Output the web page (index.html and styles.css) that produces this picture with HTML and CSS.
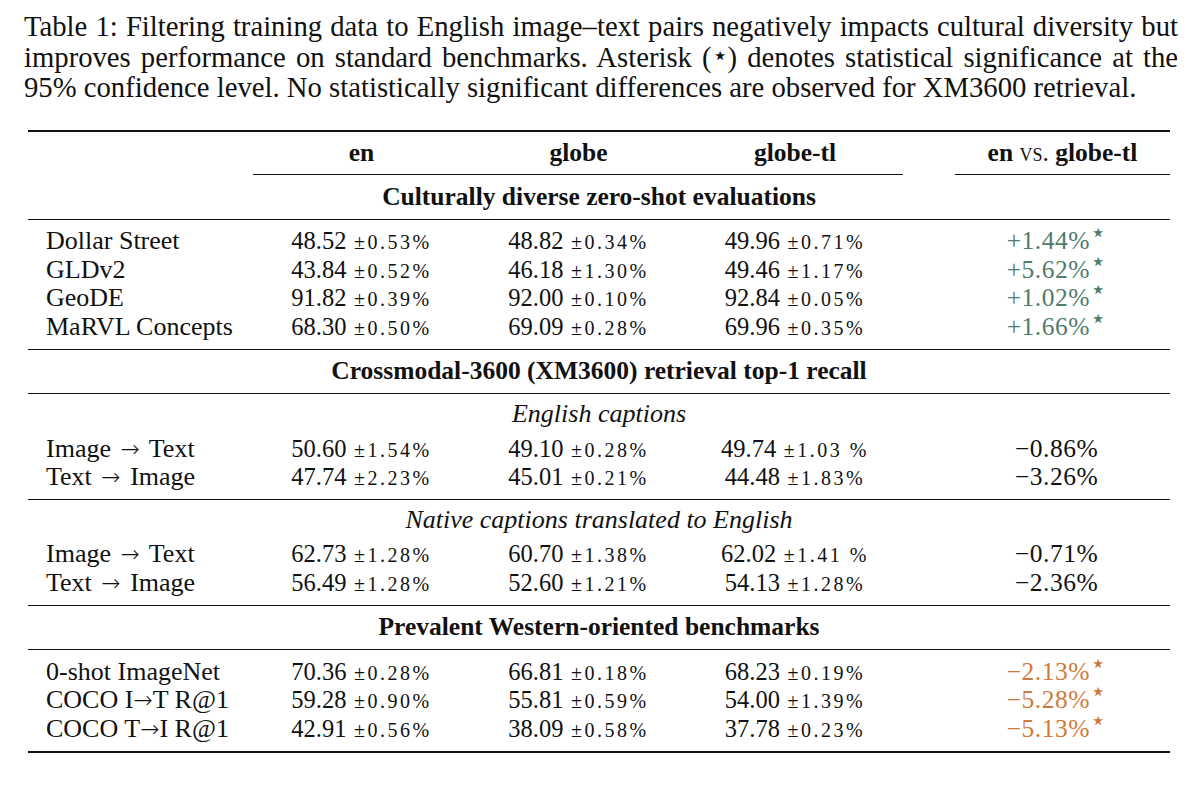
FILE: index.html
```html
<!DOCTYPE html>
<html lang="en">
<head>
<meta charset="utf-8">
<title>Table 1</title>
<link rel="stylesheet" href="styles.css">
</head>
<body>
<div class="page">
  <p class="caption">
    <span class="cl">Table 1: Filtering training data to English image–text pairs negatively impacts cultural diversity but</span>
    <span class="cl">improves performance on standard benchmarks. Asterisk (<span class="star-inline">⋆</span>) denotes statistical significance at the</span>
    <span class="cl last">95% confidence level. No statistically significant differences are observed for XM3600 retrieval.</span>
  </p>

  <div class="tbl">
    <div class="block head">
      <div class="row hrow">
        <div class="cell"></div>
        <div class="cell c b u">en</div>
        <div class="cell c b u">globe</div>
        <div class="cell c b u">globe-tl</div>
        <div class="cell"></div>
        <div class="cell c b u">en <span class="sc">vs.</span> globe-tl</div>
      </div>
      <div class="row sec-row">
        <div class="cell c b full">Culturally diverse zero-shot evaluations</div>
      </div>
    </div>

    <div class="block">
      <div class="row"><div class="cell lbl">Dollar Street</div><div class="cell c num">48.52<span class="pm"> ±0.53%</span></div><div class="cell c num">48.82<span class="pm"> ±0.34%</span></div><div class="cell c num">49.96<span class="pm"> ±0.71%</span></div><div class="cell"></div><div class="cell c diff pos">+1.44%<sup class="star">⋆</sup></div></div>
      <div class="row"><div class="cell lbl">GLDv2</div><div class="cell c num">43.84<span class="pm"> ±0.52%</span></div><div class="cell c num">46.18<span class="pm"> ±1.30%</span></div><div class="cell c num">49.46<span class="pm"> ±1.17%</span></div><div class="cell"></div><div class="cell c diff pos">+5.62%<sup class="star">⋆</sup></div></div>
      <div class="row"><div class="cell lbl">GeoDE</div><div class="cell c num">91.82<span class="pm"> ±0.39%</span></div><div class="cell c num">92.00<span class="pm"> ±0.10%</span></div><div class="cell c num">92.84<span class="pm"> ±0.05%</span></div><div class="cell"></div><div class="cell c diff pos">+1.02%<sup class="star">⋆</sup></div></div>
      <div class="row"><div class="cell lbl">MaRVL Concepts</div><div class="cell c num">68.30<span class="pm"> ±0.50%</span></div><div class="cell c num">69.09<span class="pm"> ±0.28%</span></div><div class="cell c num">69.96<span class="pm"> ±0.35%</span></div><div class="cell"></div><div class="cell c diff pos">+1.66%<sup class="star">⋆</sup></div></div>
    </div>

    <div class="block">
      <div class="row"><div class="cell c b full">Crossmodal-3600 (XM3600) retrieval top-1 recall</div></div>
    </div>

    <div class="block">
      <div class="row sub-row sub-en"><div class="cell c i full">English captions</div></div>
      <div class="row"><div class="cell lbl">Image <span class="arr sp">→</span> Text</div><div class="cell c num">50.60<span class="pm"> ±1.54%</span></div><div class="cell c num">49.10<span class="pm"> ±0.28%</span></div><div class="cell c num">49.74<span class="pm"> ±1.03 %</span></div><div class="cell"></div><div class="cell c diff">−0.86%</div></div>
      <div class="row"><div class="cell lbl">Text <span class="arr sp">→</span> Image</div><div class="cell c num">47.74<span class="pm"> ±2.23%</span></div><div class="cell c num">45.01<span class="pm"> ±0.21%</span></div><div class="cell c num">44.48<span class="pm"> ±1.83%</span></div><div class="cell"></div><div class="cell c diff">−3.26%</div></div>
    </div>

    <div class="block">
      <div class="row sub-row sub-nat"><div class="cell c i full">Native captions translated to English</div></div>
      <div class="row"><div class="cell lbl">Image <span class="arr sp">→</span> Text</div><div class="cell c num">62.73<span class="pm"> ±1.28%</span></div><div class="cell c num">60.70<span class="pm"> ±1.38%</span></div><div class="cell c num">62.02<span class="pm"> ±1.41 %</span></div><div class="cell"></div><div class="cell c diff">−0.71%</div></div>
      <div class="row"><div class="cell lbl">Text <span class="arr sp">→</span> Image</div><div class="cell c num">56.49<span class="pm"> ±1.28%</span></div><div class="cell c num">52.60<span class="pm"> ±1.21%</span></div><div class="cell c num">54.13<span class="pm"> ±1.28%</span></div><div class="cell"></div><div class="cell c diff">−2.36%</div></div>
    </div>

    <div class="block">
      <div class="row"><div class="cell c b full">Prevalent Western-oriented benchmarks</div></div>
    </div>

    <div class="block">
      <div class="row"><div class="cell lbl">0-shot ImageNet</div><div class="cell c num">70.36<span class="pm"> ±0.28%</span></div><div class="cell c num">66.81<span class="pm"> ±0.18%</span></div><div class="cell c num">68.23<span class="pm"> ±0.19%</span></div><div class="cell"></div><div class="cell c diff neg">−2.13%<sup class="star">⋆</sup></div></div>
      <div class="row"><div class="cell lbl">COCO I<span class="arr">→</span>T R@1</div><div class="cell c num">59.28<span class="pm"> ±0.90%</span></div><div class="cell c num">55.81<span class="pm"> ±0.59%</span></div><div class="cell c num">54.00<span class="pm"> ±1.39%</span></div><div class="cell"></div><div class="cell c diff neg">−5.28%<sup class="star">⋆</sup></div></div>
      <div class="row"><div class="cell lbl">COCO T<span class="arr">→</span>I R@1</div><div class="cell c num">42.91<span class="pm"> ±0.56%</span></div><div class="cell c num">38.09<span class="pm"> ±0.58%</span></div><div class="cell c num">37.78<span class="pm"> ±0.23%</span></div><div class="cell"></div><div class="cell c diff neg">−5.13%<sup class="star">⋆</sup></div></div>
    </div>
  </div>
</div>
</body>
</html>
```

FILE: styles.css
```css
html, body {
  margin: 0;
  padding: 0;
  background: #ffffff;
}

body {
  font-family: "Liberation Serif", "Times New Roman", serif;
  color: #111111;
  width: 1200px;
  height: 789px;
  overflow: hidden;
}

.page {
  padding: 11px 0 0 24px;
}

.caption {
  margin: 0 0 28px 0;
  width: 1154px;
  font-size: 28.7px;
  line-height: 30px;
}

.cl {
  display: block;
  text-align: justify;
  text-align-last: justify;
}

.cl.last {
  text-align-last: left;
}

.star-inline {
  font-size: 26px;
  vertical-align: 3px;
}

.tbl {
  width: 1142px;
  margin-left: 4px;
  border-bottom: 2px solid #111;
}

.block {
  border-top: 1px solid #111;
  padding: 7.5px 0;
}

.block.head {
  border-top: 2px solid #111;
  padding-top: 7px;
}

.row {
  display: grid;
  grid-template-columns: 225px 217px 217px 216px 52px 215px;
  height: 28.5px;
  line-height: 28.5px;
  font-size: 26px;
  white-space: nowrap;
}

.hrow {
  height: auto;
  font-size: 25.5px;
}

.hrow .cell {
  padding-bottom: 6px;
}

.hrow .u {
  border-bottom: 1px solid #111;
}

.sec-row {
  margin-top: 8px;
  font-size: 25.5px;
}

.sub-en {
  margin-bottom: 4.5px;
}

.sub-nat {
  margin-bottom: 4px;
}

.cell {
  min-width: 0;
}

.c {
  text-align: center;
}

.b {
  font-weight: bold;
  font-size: 25.5px;
}

.i {
  font-style: italic;
  margin-top: -2px;
}

.sc {
  font-weight: normal;
  font-variant: small-caps;
}

.full {
  grid-column: 1 / -1;
}

.lbl {
  padding-left: 18px;
}

.arr {
  font-family: "DejaVu Sans", sans-serif;
  font-size: 23px;
  font-weight: 300;
}

.arr.sp {
  margin: 0 3px;
}

.num {
  font-size: 24.5px;
}

.pm {
  font-size: 20px;
  letter-spacing: 2.5px;
}

.diff {
  font-size: 25.5px;
  padding-right: 12px;
  letter-spacing: 0.5px;
}

.pos {
  color: #4f7c6b;
}

.neg {
  color: #cf7a3a;
}

.star {
  font-size: 26px;
  vertical-align: 8px;
  line-height: 0;
  margin-left: 0;
}
```
